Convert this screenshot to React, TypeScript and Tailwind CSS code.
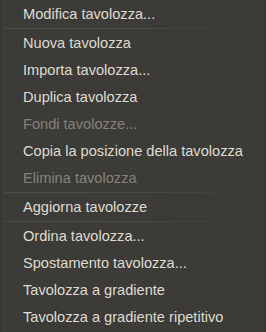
import React from 'react';

type MenuEntry = { label: string; disabled?: boolean } | { separator: true };

const entries: MenuEntry[] = [
  { label: 'Modifica tavolozza...' },
  { separator: true },
  { label: 'Nuova tavolozza' },
  { label: 'Importa tavolozza...' },
  { label: 'Duplica tavolozza' },
  { label: 'Fondi tavolozze...', disabled: true },
  { label: 'Copia la posizione della tavolozza' },
  { label: 'Elimina tavolozza', disabled: true },
  { separator: true },
  { label: 'Aggiorna tavolozze' },
  { separator: true },
  { label: 'Ordina tavolozza...' },
  { label: 'Spostamento tavolozza...' },
  { label: 'Tavolozza a gradiente' },
  { label: 'Tavolozza a gradiente ripetitivo' },
];

const App: React.FC = () => {
  return (
    <div className="w-[266px] h-[332px] overflow-hidden bg-[#3c3b37] border-x border-[#353430] pt-[1px] font-['Liberation_Sans',sans-serif] text-[14.6px]">
      {entries.map((entry, idx) =>
        'separator' in entry ? (
          <div key={idx} className="h-[2px] px-[4px]">
            <div className="h-px bg-gradient-to-r from-[#4d4c47] via-[#4a4944] to-[#3c3b37]" />
          </div>
        ) : (
          <div
            key={idx}
            className={`h-[27px] flex items-center pl-[22px] ${
              entry.disabled ? 'text-[#85827b]' : 'text-[#dfdbd2]'
            }`}>
            {entry.label}
          </div>
        )
      )}
    </div>
  );
};

export default App;
